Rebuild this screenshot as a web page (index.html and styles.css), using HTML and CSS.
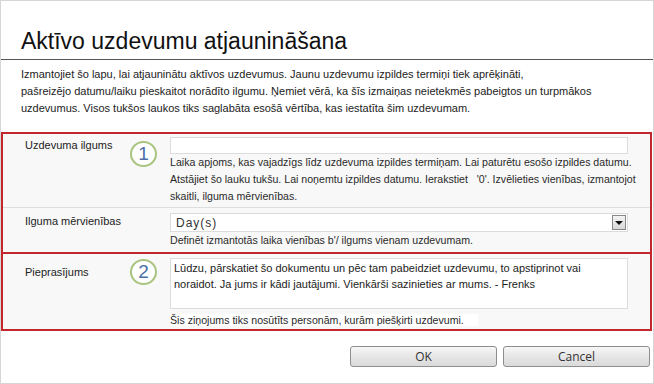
FILE: index.html
```html
<!DOCTYPE html>
<html lang="lv">
<head>
    <meta charset="UTF-8">
    <title>Aktīvo uzdevumu atjaunināšana</title>
    <link rel="stylesheet" href="styles.css">
</head>
<body>

    <div class="dialog">
        <div class="dialog-head">
            <h1 class="title">Aktīvo uzdevumu atjaunināšana</h1>
        </div>

        <p class="intro">
            Izmantojiet šo lapu, lai atjauninātu aktīvos uzdevumus. Jaunu uzdevumu izpildes termiņi tiek aprēķināti,<br>
            pašreizējo datumu/laiku pieskaitot norādīto ilgumu. Ņemiet vērā, ka šīs izmaiņas neietekmēs pabeigtos un turpmākos<br>
            uzdevumus. Visos tukšos laukos tiks saglabāta esošā vērtība, kas iestatīta šim uzdevumam.
        </p>

        <div class="section">
            <div class="row row-duration">
                <div class="label">Uzdevuma ilgums</div>
                <div class="badge">1</div>
                <div class="field">
                    <input class="text-input" type="text">
                    <div class="hint">
                        Laika apjoms, kas vajadzīgs līdz uzdevuma izpildes termiņam. Lai paturētu esošo izpildes datumu.<br>
                        Atstājiet šo lauku tukšu. Lai noņemtu izpildes datumu. Ierakstiet &nbsp; '0'. Izvēlieties vienības, izmantojot<br>
                        skaitli, ilguma mērvienības.
                    </div>
                </div>
            </div>

            <div class="row row-units">
                <div class="label">Ilguma mērvienības</div>
                <div class="badge badge-empty"></div>
                <div class="field">
                    <div class="select">
                        <span class="select-value">Day(s)</span>
                        <span class="select-btn"><span class="arrow"></span></span>
                    </div>
                    <div class="hint">Definēt izmantotās laika vienības b'/ ilgums vienam uzdevumam.</div>
                </div>
            </div>
        </div>

        <div class="section section-second">
            <div class="row row-request">
                <div class="label">Pieprasījums</div>
                <div class="badge">2</div>
                <div class="field">
                    <div class="textarea">Lūdzu, pārskatiet šo dokumentu un pēc tam pabeidziet uzdevumu, to apstiprinot vai<br>noraidot. Ja jums ir kādi jautājumi. Vienkārši sazinieties ar mums. - Frenks</div>
                    <div class="hint"><span class="hint-mark">Šis ziņojums tiks nosūtīts personām, kurām piešķirti uzdevumi.</span></div>
                </div>
            </div>
        </div>

        <div class="actions">
            <button class="btn">OK</button>
            <button class="btn">Cancel</button>
        </div>
    </div>

</body>
</html>
```

FILE: styles.css
```css
body {
    margin: 0;
    font-family: "Liberation Sans", Arial, sans-serif;
    color: #222;
    background: #fff;
}

.dialog {
    box-sizing: border-box;
    width: 654px;
    height: 384px;
    border: 1px solid #d6d6d6;
    background: #fff;
    overflow: hidden;
}

.dialog-head {
    padding: 27px 0 5px 20px;
    border-bottom: 1px solid #555;
}

.title {
    margin: 0;
    font-size: 23px;
    line-height: 26px;
    font-weight: normal;
    color: #111;
}

.intro {
    margin: 0;
    padding: 6px 20px 0 20px;
    font-size: 11px;
    line-height: 17px;
    color: #222;
    height: 66px;
}

.section {
    margin: 0 1px 0 0;
    border: 2px solid #c3262c;
    background: #f8f8f8;
}

.section-second {
    border-top: none;
}

.row {
    display: flex;
}

.row-duration {
    padding: 3px 0 2px 0;
    border-bottom: 1px solid #dedede;
}

.row-units {
    padding: 5px 0 3px 0;
}

.row-request {
    padding: 4px 0 0 0;
}

.label {
    width: 105px;
    padding-left: 22px;
    font-size: 11px;
    line-height: 17px;
    color: #222;
}

.row-request .label { padding-top: 6px; }

.badge {
    box-sizing: border-box;
    width: 27px;
    height: 26px;
    border: 2px solid #a9c47f;
    border-radius: 50%;
    background: #fff;
    color: #4b6fa8;
    font-size: 19px;
    line-height: 22px;
    text-align: center;
}

.row-duration .badge { margin-top: 4px; }
.row-request .badge { margin-top: 1px; }

.badge-empty {
    visibility: hidden;
}

.field {
    flex: 1;
    min-width: 0;
    margin-left: 13px;
    margin-right: 22px;
}

.text-input {
    display: block;
    box-sizing: border-box;
    width: 100%;
    height: 17px;
    margin: 0;
    border: 1px solid #dcdcdc;
    background: #fff;
    padding: 0 3px;
}

.hint {
    font-size: 10.6px;
    line-height: 17px;
    color: #2a2a2a;
    white-space: nowrap;
}

.row-request .hint {
    margin-top: 3px;
}

.hint-mark {
    background: #fff;
    padding-right: 14px;
}

.select {
    box-sizing: border-box;
    height: 19px;
    border: 1px solid #dcdcdc;
    background: #fff;
    display: flex;
    align-items: center;
    justify-content: space-between;
    padding-left: 5px;
}

.select-value {
    font-size: 12px;
    letter-spacing: 1px;
    color: #333;
}

.select-btn {
    box-sizing: border-box;
    width: 14px;
    height: 15px;
    margin-right: 1px;
    border: 1px solid #888;
    background: linear-gradient(#f4f4f4, #d8d8d8);
    display: flex;
    align-items: center;
    justify-content: center;
}

.arrow {
    width: 0;
    height: 0;
    border-left: 4px solid transparent;
    border-right: 4px solid transparent;
    border-top: 4px solid #111;
}

.textarea {
    box-sizing: border-box;
    height: 51px;
    border: 1px solid #dcdcdc;
    background: #fff;
    padding: 1px 3px;
    font-size: 11px;
    line-height: 16px;
    color: #222;
}

.actions {
    display: flex;
    justify-content: flex-end;
    gap: 6px;
    padding: 15px 3px 0 0;
}

.btn {
    width: 147px;
    height: 21px;
    border: 1px solid #8e8e8e;
    border-radius: 3px;
    background: linear-gradient(#f7f7f7, #e6e6e6 50%, #dadada);
    font-family: "Open Sans", "Liberation Sans", sans-serif;
    font-size: 12px;
    color: #333;
    padding: 0;
    cursor: pointer;
}
```
